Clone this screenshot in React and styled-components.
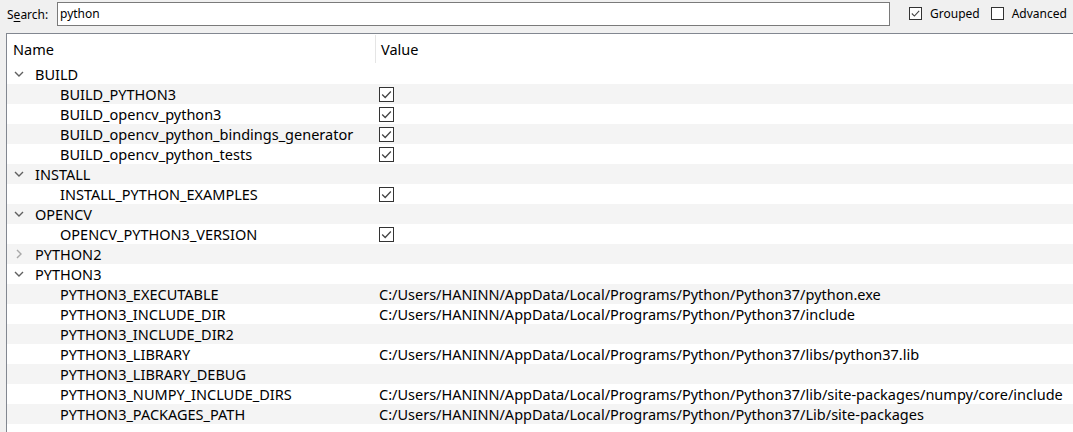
import React from 'react'
import styled, { createGlobalStyle } from 'styled-components'

const GlobalStyle = createGlobalStyle`
  html, body {
    margin: 0;
    padding: 0;
    background: #f0f0f0;
    font-family: "Noto Sans", "Open Sans", sans-serif;
    font-size: 14.5px;
    color: #000;
    overflow: hidden;
  }
`

const Window = styled.div`
  width: 1073px;
  height: 432px;
  display: flex;
  flex-direction: column;
`

const Toolbar = styled.div`
  height: 33px;
  display: flex;
  align-items: flex-start;
  padding-left: 7px;
  box-sizing: border-box;
  white-space: nowrap;
  font-size: 12px;
`

const Label = styled.span`
  margin-top: 6px;
  width: 50px;
  & u { text-decoration: underline; text-underline-offset: 2px; }
`

const SearchBox = styled.div`
  margin-top: 2px;
  width: 833px;
  height: 24px;
  box-sizing: border-box;
  border: 1px solid #7a7a7a;
  background: #fff;
  padding-left: 2px;
  line-height: 21px;
`

const Option = styled.label`
  display: flex;
  align-items: center;
  gap: 8px;
  margin-top: 7px;
  margin-left: ${p => p.gap}px;
  height: 13px;
`

const Box = styled.span`
  width: ${p => p.size}px;
  height: ${p => p.size}px;
  box-sizing: border-box;
  border: 1px solid #333;
  background: #fff;
  display: flex;
  align-items: center;
  justify-content: center;
  flex: none;
`

const Panel = styled.div`
  flex: 1;
  margin-left: 6px;
  border-top: 1px solid #828790;
  border-left: 1px solid #828790;
  background: #fff;
`

const Header = styled.div`
  height: 30px;
  display: grid;
  grid-template-columns: 368px 1fr;
  align-items: center;
`

const HeadCell = styled.div`
  height: 28px;
  display: flex;
  align-items: center;
  padding-left: ${p => p.pad}px;
  ${p => p.sep && 'border-left: 1px solid #e5e5e5;'}
`

const Row = styled.div`
  height: 20px;
  display: grid;
  grid-template-columns: 368px 1fr;
  align-items: center;
  background: ${p => (p.shade ? '#f4f4f4' : '#fff')};
  white-space: nowrap;
`

const NameCell = styled.div`
  display: flex;
  align-items: center;
  padding-left: ${p => (p.group ? 7 : 53)}px;
`

const Arrow = styled.span`
  width: 10px;
  height: 10px;
  margin-right: 11px;
  display: flex;
  align-items: center;
  justify-content: center;
`

const ValueCell = styled.div`
  padding-left: 4px;
  display: flex;
  align-items: center;
`

const Check = ({ on, size = 13 }) => (
  <Box size={size}>
    {on && (
      <svg width={size - 2} height={size - 2} viewBox="0 0 12 12">
        <path d="M2 6 L4.8 8.8 L10 3.2" fill="none" stroke="#444" strokeWidth="1.2" />
      </svg>
    )}
  </Box>
)

const Chevron = ({ open }) => (
  <Arrow>
    {open ? (
      <svg width="10" height="10" viewBox="0 0 10 10">
        <path d="M1 3 L5 7 L9 3" fill="none" stroke="#606060" strokeWidth="1.4" />
      </svg>
    ) : (
      <svg width="10" height="10" viewBox="0 0 10 10">
        <path d="M3 1 L7 5 L3 9" fill="none" stroke="#a8a8a8" strokeWidth="1.4" />
      </svg>
    )}
  </Arrow>
)

const P = 'C:/Users/HANINN/AppData/Local/Programs/Python/Python37/'

const rows = [
  { group: 'BUILD', open: true },
  { name: 'BUILD_PYTHON3', check: true },
  { name: 'BUILD_opencv_python3', check: true },
  { name: 'BUILD_opencv_python_bindings_generator', check: true },
  { name: 'BUILD_opencv_python_tests', check: true },
  { group: 'INSTALL', open: true },
  { name: 'INSTALL_PYTHON_EXAMPLES', check: true },
  { group: 'OPENCV', open: true },
  { name: 'OPENCV_PYTHON3_VERSION', check: true },
  { group: 'PYTHON2', open: false },
  { group: 'PYTHON3', open: true },
  { name: 'PYTHON3_EXECUTABLE', value: P + 'python.exe' },
  { name: 'PYTHON3_INCLUDE_DIR', value: P + 'include' },
  { name: 'PYTHON3_INCLUDE_DIR2', value: '' },
  { name: 'PYTHON3_LIBRARY', value: P + 'libs/python37.lib' },
  { name: 'PYTHON3_LIBRARY_DEBUG', value: '' },
  { name: 'PYTHON3_NUMPY_INCLUDE_DIRS', value: P + 'lib/site-packages/numpy/core/include' },
  { name: 'PYTHON3_PACKAGES_PATH', value: P + 'Lib/site-packages' },
]

const App = () => (
  <Window>
    <GlobalStyle />
    <Toolbar>
      <Label>S<u>e</u>arch:</Label>
      <SearchBox>python</SearchBox>
      <Option gap={19}>
        <Check on />
        Grouped
      </Option>
      <Option gap={11}>
        <Check />
        Advanced
      </Option>
    </Toolbar>
    <Panel>
      <Header>
        <HeadCell pad={6}>Name</HeadCell>
        <HeadCell pad={5} sep>Value</HeadCell>
      </Header>
      {rows.map((r, i) => (
        <Row key={i} shade={i % 2 === 1}>
          {r.group ? (
            <NameCell group>
              <Chevron open={r.open} />
              {r.group}
            </NameCell>
          ) : (
            <NameCell>{r.name}</NameCell>
          )}
          <ValueCell>
            {r.check && <Check on size={15} />}
            {r.value}
          </ValueCell>
        </Row>
      ))}
    </Panel>
  </Window>
)

export default App
